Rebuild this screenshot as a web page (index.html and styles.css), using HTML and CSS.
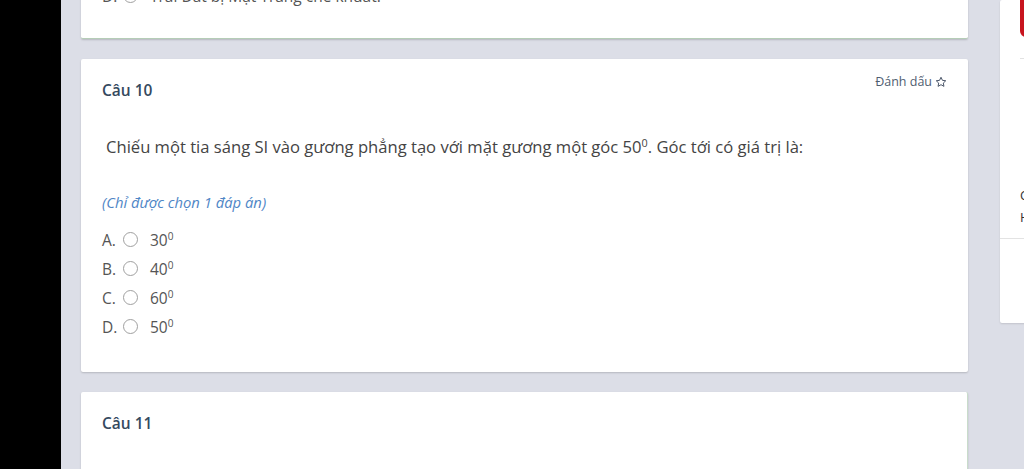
FILE: index.html
```html
<!DOCTYPE html>
<html lang="vi">
<head>
    <meta charset="UTF-8">
    <meta name="viewport" content="width=device-width, initial-scale=1.0">
    <title>Bài kiểm tra</title>
    <link rel="stylesheet" href="styles.css">
</head>
<body>
    <div class="side-black"></div>
    <div class="main">
        <div class="question-list">
            <div class="card card-done">
                <div class="option">
                    <span class="opt-label">D.</span>
                    <span class="radio"></span>
                    <span class="opt-text">Trái Đất bị Mặt Trăng che khuất.</span>
                </div>
            </div>

            <div class="card">
                <div class="card-head">
                    <div class="q-title">Câu 10</div>
                    <div class="mark">Đánh dấu
                        <svg class="star" viewBox="0 0 24 24" width="12" height="12">
                            <path d="M12 2.5l2.9 6.2 6.6.8-4.9 4.6 1.3 6.6L12 17.4l-5.9 3.3 1.3-6.6-4.9-4.6 6.6-.8z" fill="none" stroke="#4a5568" stroke-width="2" stroke-linejoin="round"/>
                        </svg>
                    </div>
                </div>
                <div class="q-text">Chiếu một tia sáng SI vào gương phẳng tạo với mặt gương một góc 50<sup>0</sup>. Góc tới có giá trị là:</div>
                <div class="q-hint">(Chỉ được chọn 1 đáp án)</div>
                <div class="options">
                    <div class="option"><span class="opt-label">A.</span><span class="radio"></span><span class="opt-text">30<sup>0</sup></span></div>
                    <div class="option"><span class="opt-label">B.</span><span class="radio"></span><span class="opt-text">40<sup>0</sup></span></div>
                    <div class="option"><span class="opt-label">C.</span><span class="radio"></span><span class="opt-text">60<sup>0</sup></span></div>
                    <div class="option"><span class="opt-label">D.</span><span class="radio"></span><span class="opt-text">50<sup>0</sup></span></div>
                </div>
            </div>

            <div class="card card-next">
                <div class="card-head">
                    <div class="q-title">Câu 11</div>
                </div>
            </div>
        </div>
    </div>
    <div class="side-panel">
        <div class="panel-box">
            <div class="panel-btn"></div>
            <div class="panel-line"></div>
            <div class="panel-info">
                <div>C</div>
                <div>H</div>
            </div>
            <div class="panel-sep"></div>
        </div>
    </div>
</body>
</html>
```

FILE: styles.css
```css
body {
    margin: 0;
    height: 469px;
    overflow: hidden;
    display: flex;
    font-family: "Open Sans", "Noto Sans", sans-serif;
    background-color: #dcdee7;
}
.side-black {
    width: 61px;
    flex-shrink: 0;
    background-color: #000;
}
.main {
    width: 939px;
    flex-shrink: 0;
    overflow: hidden;
}
.question-list {
    margin-top: -61px;
    padding-left: 20px;
    width: 887px;
    display: flex;
    flex-direction: column;
    gap: 20px;
}
.card {
    background-color: #fff;
    border-radius: 2px;
    box-shadow: 0 1px 2px rgba(0,0,0,0.18);
    padding: 14px 21px 31px 21px;
}
.card-done {
    height: 100px;
    box-sizing: border-box;
    padding-top: 42px;
    border-bottom: 1px solid #b5cdb7;
}
.card-next {
    height: 120px;
    box-sizing: border-box;
    border-right: 1px solid #c9dccb;
}
.card-head {
    display: flex;
    justify-content: space-between;
    align-items: flex-start;
}
.q-title {
    margin-top: 7px;
    font-size: 15.5px;
    line-height: 20px;
    font-weight: 600;
    color: #34495e;
}
.mark {
    font-size: 12.5px;
    line-height: 18px;
    color: #4f5d70;
    display: flex;
    align-items: center;
    gap: 3px;
}
.star {
    margin-top: -1px;
}
.q-text {
    margin-top: 35px;
    margin-left: 4px;
    font-size: 16.6px;
    line-height: 24px;
    color: #444;
}
sup {
    font-size: 0.65em;
    line-height: 0;
    vertical-align: 0.6em;
}
.q-hint {
    margin-top: 33px;
    font-size: 14.8px;
    line-height: 20px;
    font-style: italic;
    color: #4f86c6;
}
.options {
    margin-top: 13px;
}
.option {
    display: flex;
    align-items: center;
    height: 29px;
    font-size: 15.5px;
    color: #555;
}
.opt-label {
    width: 21px;
}
.radio {
    width: 13px;
    height: 13px;
    border: 1px solid #a0a0a0;
    border-radius: 50%;
    margin-right: 12px;
}
.opt-text {
    color: #555;
}
.side-panel {
    flex: 1;
}
.panel-box {
    height: 323px;
    background-color: #fff;
    border-radius: 2px 0 0 2px;
    box-shadow: 0 1px 2px rgba(0,0,0,0.12);
    padding-left: 20px;
    display: flex;
    flex-direction: column;
}
.panel-btn {
    height: 37px;
    background-color: #c8141e;
    border-radius: 0 0 0 6px;
}
.panel-line {
    margin-top: 21px;
    height: 1px;
    background-color: #e2e2e2;
}
.panel-info {
    margin-top: 125px;
    font-size: 13px;
    line-height: 22px;
    color: #333;
}
.panel-sep {
    margin-top: 10px;
    margin-left: -20px;
    height: 1px;
    background-color: #e3e3e3;
}
```
